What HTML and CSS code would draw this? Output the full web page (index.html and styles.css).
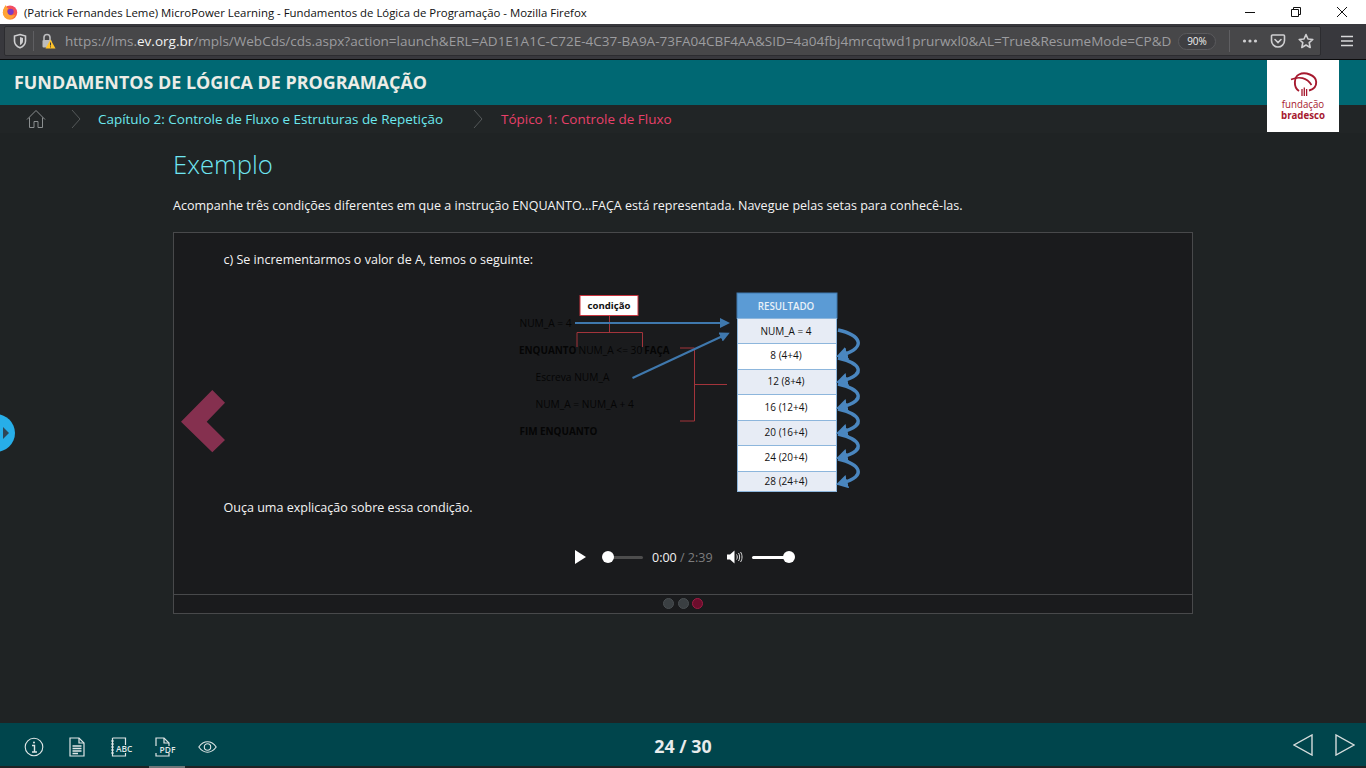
FILE: index.html
```html
<!DOCTYPE html>
<html lang="pt-BR">
<head>
<meta charset="utf-8">
<title>Fundamentos de Lógica de Programação</title>
<link rel="stylesheet" href="styles.css">
</head>
<body>
<div class="titlebar">
  <svg class="ff-logo" width="16" height="16" viewBox="0 0 16 16"><defs><linearGradient id="ffg" x1="0.9" y1="0" x2="0.2" y2="1"><stop offset="0" stop-color="#f0407a"/><stop offset="0.5" stop-color="#f9603a"/><stop offset="1" stop-color="#ffb43a"/></linearGradient></defs><circle cx="8" cy="8.6" r="7.2" fill="url(#ffg)"/><circle cx="8.6" cy="7.8" r="3.1" fill="#7b3bc4"/><path d="M1 7C2 3 3 2 4 1C4 3 5 4 6.5 4.4C4.5 5.5 4.6 8 6 10C7.5 12 11 12 13.5 10.5C12 14 8 15.5 5 14.5C2.5 13.5 .7 10.5 1 7Z" fill="#ffa436"/></svg>
  <span class="win-title">(Patrick Fernandes Leme) MicroPower Learning - Fundamentos de Lógica de Programação - Mozilla Firefox</span>
  <div class="win-controls">
    <svg width="12" height="12" viewBox="0 0 12 12"><path d="M1 6.5H11" stroke="#111" stroke-width="1"/></svg>
    <svg width="12" height="12" viewBox="0 0 12 12" fill="none" stroke="#111"><path d="M1.5 3.5H8.5V10.5H1.5Z"/><path d="M3.5 3.5V1.5H10.5V8.5H8.5"/></svg>
    <svg width="12" height="12" viewBox="0 0 12 12" fill="none" stroke="#111"><path d="M1 1L11 11M11 1L1 11"/></svg>
  </div>
</div>

<div class="toolbar">
  <div class="urlbar">
    <svg class="shield" width="14" height="16" viewBox="0 0 14 16" fill="none"><path d="M7 1.5 L12.5 3 V8 C12.5 11.5 9.5 13.8 7 14.8 C4.5 13.8 1.5 11.5 1.5 8 V3 Z" stroke="#cfcfd1" stroke-width="1.6"/><path d="M7 4 L10 5 V8 C10 10 8.4 11.4 7 12 Z" fill="#cfcfd1"/></svg>
    <span class="url-sep"></span>
    <svg class="lock" width="16" height="16" viewBox="0 0 16 16"><path d="M4 7V4.5A3 3 0 0 1 10 4.5V7" fill="none" stroke="#bcbcbe" stroke-width="1.6"/><rect x="2.5" y="7" width="9" height="7.5" rx="1" fill="#bcbcbe"/><path d="M10.5 6.5 L15.5 15.5 H5.5 Z" fill="#ffc329"/><path d="M10.5 9.5V12.5M10.5 13.4V14.4" stroke="#38383d" stroke-width="1"/></svg>
    <span class="url"><span class="url-dim">https://lms.</span><span class="url-host">ev.org.br</span><span class="url-dim">/mpls/WebCds/cds.aspx?action=launch&amp;ERL=AD1E1A1C-C72E-4C37-BA9A-73FA04CBF4AA&amp;SID=4a04fbj4mrcqtwd1prurwxl0&amp;AL=True&amp;ResumeMode=CP&amp;D</span></span>
    <span class="zoom-pill">90%</span>
    <span class="url-sep url-sep-right"></span>
    <svg class="url-icon" width="16" height="16" viewBox="0 0 16 16" fill="#cfcfd1"><circle cx="2.5" cy="8" r="1.6"/><circle cx="8" cy="8" r="1.6"/><circle cx="13.5" cy="8" r="1.6"/></svg>
    <svg class="url-icon" width="16" height="16" viewBox="0 0 16 16" fill="none" stroke="#cfcfd1" stroke-width="1.6"><path d="M2.5 2H13.5A1 1 0 0 1 14.5 3V7.5C14.5 11 11.5 14 8 14C4.5 14 1.5 11 1.5 7.5V3A1 1 0 0 1 2.5 2Z"/><path d="M5 6.5L8 9.5L11 6.5" stroke-linecap="round"/></svg>
    <svg class="url-icon" width="16" height="16" viewBox="0 0 16 16" fill="none" stroke="#cfcfd1" stroke-width="1.6"><path d="M8 1.5L10 6L14.8 6.5L11.2 9.7L12.2 14.5L8 12L3.8 14.5L4.8 9.7L1.2 6.5L6 6Z" stroke-linejoin="round"/></svg>
  </div>
  <svg class="menu" width="14" height="14" viewBox="0 0 14 14" stroke="#d8d8da" stroke-width="1.6"><path d="M1 2.5H13M1 7H13M1 11.5H13"/></svg>
</div>

<header class="course-header">
  <h1 class="course-title">FUNDAMENTOS DE LÓGICA DE PROGRAMAÇÃO</h1>
</header>

<nav class="breadcrumb">
  <svg class="home" width="20" height="20" viewBox="0 0 20 20" fill="none" stroke="#8b8f90" stroke-width="1"><path d="M1 10.5L10 1.5L19 10.5"/><path d="M3.5 8.5V18.5H8V12.5H12V18.5H16.5V8.5"/></svg>
  <svg class="crumb-sep crumb-sep-a" width="10" height="20" viewBox="0 0 10 20" fill="none" stroke="#55595a"><path d="M1 1L9 10L1 19"/></svg>
  <span class="crumb-chapter">Capítulo 2: Controle de Fluxo e Estruturas de Repetição</span>
  <svg class="crumb-sep crumb-sep-b" width="10" height="20" viewBox="0 0 10 20" fill="none" stroke="#55595a"><path d="M1 1L9 10L1 19"/></svg>
  <span class="crumb-topic">Tópico 1: Controle de Fluxo</span>
</nav>

<div class="logo-box">
  <svg class="logo-mark" width="26" height="24" viewBox="0 0 26 24" fill="none" stroke="#a6192e"><path d="M0 7.5C8 4 16 5.5 20.5 13" stroke-width="1.6"/><path d="M8 19C2 15 3 5 8 2.5C14 -.5 25 3 25.2 10C25.4 14.5 22 17.5 18 18.5" stroke-width="1.9"/><path d="M11 17V24M13.3 15.5V24M15.6 17V24" stroke-width="1.3"/></svg>
  <p class="logo-text">fundação<br><strong>bradesco</strong></p>
</div>

<div class="side-tab"><span class="side-arrow"></span></div>

<main class="main">
  <h2 class="heading">Exemplo</h2>
  <p class="intro">Acompanhe três condições diferentes em que a instrução ENQUANTO...FAÇA está representada. Navegue pelas setas para conhecê-las.</p>
  <section class="panel">
    <div class="slide">
      <svg class="prev" width="44" height="63" viewBox="0 0 44 63"><path d="M0 31.7L31.3 0L44 12.7L25.7 31.7L44 50L31.3 62.3Z" fill="#85304f"/></svg>
      <p class="slide-text">c) Se incrementarmos o valor de A, temos o seguinte:</p>
      <svg class="diagram" width="360" height="215" viewBox="0 0 360 215">
        <defs>
          <marker id="ah" markerWidth="5" markerHeight="5" refX="3.5" refY="2.5" orient="auto"><path d="M0 0L5 2.5L0 5Z" fill="#3f78ad"/></marker>
          <marker id="ah2" markerWidth="3.4" markerHeight="4" refX="1.6" refY="2" orient="auto"><path d="M0 0L3.4 2L0 4Z" fill="#4a86bf"/></marker>
        </defs>
        <rect class="d-box" x="70" y="10.5" width="58" height="20"/>
        <text class="d-cond" x="99" y="23.5">condição</text>
        <path class="d-red" d="M99.5 31V47M67 62V47.5H132.5V62"/>
        <path class="d-red" d="M170 63H184.5V136H170M185 99.5H217"/>
        <text class="d-code" x="9.5" y="41.5">NUM_A = 4</text>
        <text class="d-code" y="68.5"><tspan class="d-bold" x="9">ENQUANTO</tspan> <tspan x="68.5">NUM_A &lt;= 30</tspan> <tspan class="d-bold" x="134.3">FAÇA</tspan></text>
        <text class="d-code" x="25.5" y="95.5">Escreva NUM_A</text>
        <text class="d-code" x="25.5" y="122.5">NUM_A = NUM_A + 4</text>
        <text class="d-code d-bold" x="9.5" y="149.5">FIM ENQUANTO</text>
        <path class="d-arrow" d="M65 38H217" marker-end="url(#ah)"/>
        <path class="d-arrow" d="M122.5 93L217 49" marker-end="url(#ah)"/>
        <rect class="d-head" x="227" y="8" width="100" height="25.5"/>
        <text class="d-headtxt" x="276" y="24.5">RESULTADO</text>
        <rect class="d-row d-alt" x="227.5" y="33.5" width="99" height="25"/>
        <rect class="d-row" x="227.5" y="58.5" width="99" height="26"/>
        <rect class="d-row d-alt" x="227.5" y="84.5" width="99" height="25"/>
        <rect class="d-row" x="227.5" y="109.5" width="99" height="26"/>
        <rect class="d-row d-alt" x="227.5" y="135.5" width="99" height="25"/>
        <rect class="d-row" x="227.5" y="160.5" width="99" height="26"/>
        <rect class="d-row d-alt" x="227.5" y="186.5" width="99" height="20"/>
        <text class="d-cell" x="276" y="49.5">NUM_A = 4</text>
        <text class="d-cell" x="276" y="74">8 (4+4)</text>
        <text class="d-cell" x="276" y="100">12 (8+4)</text>
        <text class="d-cell" x="276" y="125.5">16 (12+4)</text>
        <text class="d-cell" x="276" y="150.5">20 (16+4)</text>
        <text class="d-cell" x="276" y="175.5">24 (20+4)</text>
        <text class="d-cell" x="276" y="199.5">28 (24+4)</text>
        <path class="d-swirl" d="M328 45C350 50 358 62 332 70" marker-end="url(#ah2)"/>
        <path class="d-swirl" d="M328 73C350 78 358 89 332 96" marker-end="url(#ah2)"/>
        <path class="d-swirl" d="M328 99C350 104 358 115 332 122" marker-end="url(#ah2)"/>
        <path class="d-swirl" d="M328 124C350 129 358 140 332 147" marker-end="url(#ah2)"/>
        <path class="d-swirl" d="M328 149C350 154 358 165 332 172" marker-end="url(#ah2)"/>
        <path class="d-swirl" d="M328 174C350 179 358 191 332 198" marker-end="url(#ah2)"/>
      </svg>
      <p class="slide-text slide-listen">Ouça uma explicação sobre essa condição.</p>
      <div class="player">
        <svg class="play" width="12" height="14" viewBox="0 0 12 14"><path d="M1 0L12 7L1 14Z" fill="#fff"/></svg>
        <div class="track"><span class="knob knob-start"></span></div>
        <span class="time"><span class="time-now">0:00</span> / 2:39</span>
        <svg class="speaker" width="16" height="14" viewBox="0 0 16 14"><path d="M0 4.5H3L7.5 0.5V13.5L3 9.5H0Z" fill="#fff"/><path d="M9.5 4.5C10.5 5.5 10.5 8.5 9.5 9.5M11.5 3C13 5 13 9 11.5 11M13.5 2C15.5 4.5 15.5 9.5 13.5 12" fill="none" stroke="#ddd"/></svg>
        <div class="volume"><span class="knob knob-end"></span></div>
      </div>
    </div>
    <div class="dots"><span class="dot"></span><span class="dot"></span><span class="dot dot-on"></span></div>
  </section>
</main>

<footer class="footer">
  <div class="foot-icons">
    <svg width="20" height="20" viewBox="0 0 20 20" fill="none" stroke="#dfe6e6" stroke-width="1.1"><circle cx="10" cy="10" r="8.8"/><path d="M8 8.5H10.5V14.5M8 15H13" stroke-width="1.4"/><circle cx="10" cy="5.6" r="1" fill="#dfe6e6" stroke="none"/></svg>
    <svg width="16" height="20" viewBox="0 0 16 20" fill="none" stroke="#dfe6e6" stroke-width="1.2"><path d="M1 1H10L15 6V19H1Z"/><path d="M10 1V6H15" /><path d="M3.5 9H12.5M3.5 11.5H12.5M3.5 14H12.5M3.5 16.5H9" stroke-width="1.4"/></svg>
    <svg class="foot-abc" width="20" height="20" viewBox="0 0 20 20" fill="none" stroke="#dfe6e6"><path d="M2.5 1H15.5V8M15.5 16V19H2.5V1" stroke-width="1.2"/><path d="M1 4H4M1 7H4M1 10H4M1 13H4M1 16H4"/><text class="foot-svgtxt" x="6" y="15">ABC</text></svg>
    <svg class="foot-pdf" width="18" height="20" viewBox="0 0 18 20" fill="none" stroke="#dfe6e6" stroke-width="1.2"><path d="M1 9V1H9L14 6V9M14 16V19H1V16"/><path d="M9 1V6H14"/><text class="foot-svgtxt" x="4.6" y="15.5">PDF</text></svg>
    <svg class="foot-eye" width="19" height="12" viewBox="0 0 19 12" fill="none" stroke="#dfe6e6" stroke-width="1.1"><path d="M.8 6C4 1.5 7 .8 9.5 .8C12 .8 15 1.5 18.2 6C15 10.5 12 11.2 9.5 11.2C7 11.2 4 10.5 .8 6Z"/><circle cx="9.5" cy="6" r="3.2"/></svg>
  </div>
  <span class="pager">24 / 30</span>
  <div class="foot-nav">
    <svg width="20" height="22" viewBox="0 0 20 22" fill="none" stroke="#d5dcdc" stroke-width="1.4"><path d="M19 1V21L1 11Z"/></svg>
    <svg width="20" height="22" viewBox="0 0 20 22" fill="none" stroke="#d5dcdc" stroke-width="1.4"><path d="M1 1V21L19 11Z"/></svg>
  </div>
</footer>
<div class="foot-strip"><span class="foot-tab"></span></div>
</body>
</html>
```
FILE: styles.css
```css
* { box-sizing: border-box; }
html, body { margin: 0; height: 768px; overflow: hidden; }
body {
  display: flex;
  flex-direction: column;
  background: #1f2324;
  font-family: "Open Sans", "Noto Sans", sans-serif;
  color: #fff;
  position: relative;
}
.titlebar {
  height: 24px;
  background: #fff;
  display: flex;
  align-items: center;
  padding-left: 2px;
  color: #111;
  flex: none;
}
.ff-logo { margin-right: 6px; }
.win-title { font-size: 11.4px; white-space: nowrap; font-family: "Open Sans", sans-serif; }
.win-controls { margin-left: auto; display: flex; gap: 34px; padding-right: 18px; }

.toolbar {
  height: 36px;
  flex: none;
  background: #38383d;
  border-bottom: 1px solid #0c0c0d;
  display: flex;
  align-items: center;
  padding: 0 13px 1px 4px;
}
.urlbar {
  width: 1317px;
  height: 30px;
  flex: none;
  background: #474749;
  border: 1px solid #2c2c30;
  border-radius: 2px;
  display: flex;
  align-items: center;
  padding-left: 8px;
}
.shield { flex: none; }
.url-sep { width: 1px; height: 20px; background: #5f5f62; margin: 0 6px 0 6px; flex: none; }
.lock { flex: none; margin-right: 9px; }
.url { font-size: 13.53px; white-space: nowrap; width: 1109px; overflow: hidden; flex: none; font-family: "Open Sans", sans-serif; }
.url-dim { color: #9c9c9f; }
.url-host { color: #f2f2f2; }
.zoom-pill {
  flex: none;
  width: 38px;
  height: 17px;
  margin-left: 4px;
  border: 1px solid #5a5a5d;
  border-radius: 9px;
  background: #3f3f42;
  font-size: 10px;
  line-height: 15px;
  text-align: center;
  color: #f0f0f0;
}
.url-sep-right { margin: 0 12px 0 13px; height: 22px; }
.url-icon { flex: none; margin-right: 12px; }
.menu { margin-left: 19px; flex: none; }

.course-header {
  height: 45px;
  flex: none;
  background: #006873;
  display: flex;
  align-items: center;
  padding-left: 14px;
}
.course-title { margin: 0 0 2px; font-size: 17.9px; font-weight: 700; color: #ecece6; white-space: nowrap; }

.breadcrumb {
  height: 28px;
  flex: none;
  background: #212526;
  display: flex;
  align-items: center;
  padding-left: 26px;
  font-size: 13.46px;
  white-space: nowrap;
}
.crumb-sep-a { margin: 0 17px 0 25px; }
.crumb-sep-b { margin: 0 18px 0 30px; }
.crumb-chapter { color: #6ce8ee; }
.crumb-topic { color: #e8406a; }

.logo-box {
  position: absolute;
  left: 1267px;
  top: 60px;
  width: 72px;
  height: 72px;
  background: #fff;
  display: flex;
  flex-direction: column;
  align-items: center;
  padding-top: 12px;
  color: #a6192e;
}
.logo-mark { flex: none; overflow: visible; margin-left: 1px; }
.logo-text { margin: 3px 0 0; font-size: 11px; line-height: 10.5px; text-align: center; transform: scaleX(0.88); }

.side-tab {
  position: absolute;
  left: -24px;
  top: 414px;
  width: 39px;
  height: 38px;
  border-radius: 50%;
  background: #27aee8;
}
.side-arrow {
  position: absolute;
  left: 27px;
  top: 13px;
  border-left: 6px solid #2f4656;
  border-top: 6px solid transparent;
  border-bottom: 6px solid transparent;
}

.main { flex: 1; padding-left: 173px; min-height: 0; }
.heading {
  margin: 0;
  padding-top: 14px;
  font-size: 25.7px;
  line-height: 36px;
  font-weight: 300;
  color: #6fe6f2;
}
.intro { margin: 0; padding-top: 14px; font-size: 12.54px; line-height: 18px; color: #f4f4f4; white-space: nowrap; height: 49px; }
.panel {
  width: 1020px;
  height: 382px;
  border: 1px solid #48494b;
  background: #1a1b1d;
  display: flex;
  flex-direction: column;
}
.slide {
  position: relative;
  height: 362px;
  border-bottom: 1px solid #48494b;
  display: flex;
  flex-direction: column;
}
.prev { position: absolute; left: 7px; top: 157px; }
.slide-text { margin: 0; padding: 18px 0 0 49.5px; font-size: 12.54px; line-height: 18px; color: #f4f4f4; }
.slide-listen { padding-top: 0; margin-top: -1px; }
.diagram { margin: 16px 0 0 336px; flex: none; display: block; }
.d-box { fill: #fff; stroke: #c8343f; stroke-width: 1; }
.d-cond { font-size: 9.6px; font-weight: 700; fill: #111; text-anchor: middle; }
.d-red { fill: none; stroke: #a3343b; stroke-width: 1; }
.d-code { font-size: 10.2px; fill: #050505; }
.d-bold { font-weight: 700; font-size: 9.9px; }
.d-arrow { fill: none; stroke: #3f78ad; stroke-width: 2; }
.d-head { fill: #5b9bd5; stroke: #3f78ad; stroke-width: 1; }
.d-headtxt { font-size: 9.8px; fill: #e8f1f8; text-anchor: middle; font-weight: 600; }
.d-row { fill: #fff; stroke: #8db6dc; stroke-width: 1; }
.d-alt { fill: #e7ecf5; }
.d-cell { font-size: 10px; fill: #111; text-anchor: middle; }
.d-swirl { fill: none; stroke: #4a86bf; stroke-width: 3.4; }

.player {
  position: absolute;
  left: 400px;
  top: 316px;
  display: flex;
  align-items: center;
  height: 16px;
}
.track {
  position: relative;
  width: 35px;
  height: 3px;
  margin-left: 22px;
  background: #4d4d4d;
  border-radius: 2px;
}
.knob {
  position: absolute;
  top: -4.5px;
  width: 12px;
  height: 12px;
  border-radius: 50%;
  background: #fff;
}
.knob-start { left: -6px; }
.knob-end { right: -6px; }
.time { margin-left: 9px; font-size: 12.5px; color: #7d7d7d; white-space: nowrap; }
.time-now { color: #f2f2f2; }
.speaker { margin-left: 14px; }
.volume {
  position: relative;
  width: 37px;
  height: 3px;
  margin-left: 9px;
  margin-right: 6px;
  background: #fff;
  border-radius: 2px;
}
.dots { flex: 1; display: flex; justify-content: center; align-items: center; gap: 3.5px; padding-bottom: 1px; }
.dot { width: 11px; height: 11px; border-radius: 50%; background: #3a3f42; border: 1px solid #4a4f52; }
.dot-on { background: #6b0d2c; border-color: #a01c44; }

.footer {
  height: 43px;
  flex: none;
  background: #00454c;
  display: flex;
  align-items: center;
  position: relative;
  padding: 5px 11px 0 24px;
}
.foot-icons { display: flex; align-items: center; gap: 25px; }
.foot-icons svg { overflow: visible; }
.foot-svgtxt { font-size: 8.4px; font-weight: 600; fill: #dfe6e6; stroke: none; font-family: "Open Sans", sans-serif; }
.pager {
  position: absolute;
  left: 0;
  right: 0;
  margin-top: -3px;
  text-align: center;
  font-size: 17.8px;
  font-weight: 700;
  color: #e8ecec;
}
.foot-nav { margin-left: auto; display: flex; gap: 22px; }
.foot-nav svg { margin-top: -5px; }
.foot-strip { height: 2px; flex: none; background: #1f2324; padding-left: 149px; }
.foot-tab { display: block; width: 36px; height: 2px; background: #6f7678; }
```
